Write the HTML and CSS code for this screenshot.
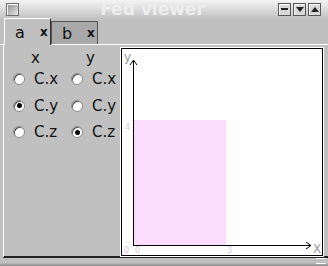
FILE: index.html
```html
<!DOCTYPE html>
<html lang="en">
<head>
    <meta charset="UTF-8">
    <title>Fed viewer</title>
    <link rel="stylesheet" href="styles.css">
</head>
<body>

<div class="window">
    <div class="titlebar">
        <span class="closebox"></span>
        <span class="title">Fed viewer</span>
        <div class="wbuttons">
            <span class="wbtn"><i class="bar"></i></span>
            <span class="wbtn"><i class="down"></i></span>
            <span class="wbtn"><i class="up"></i></span>
        </div>
    </div>

    <div class="tabs">
        <div class="tab active"><span>a</span><b>x</b></div>
        <div class="tab"><span>b</span><b>x</b></div>
    </div>

    <div class="panel">
        <div class="choices">
            <div class="head">x</div>
            <div class="head">y</div>
            <label class="opt"><span class="radio"></span>C.x</label>
            <label class="opt"><span class="radio"></span>C.x</label>
            <label class="opt"><span class="radio on"></span>C.y</label>
            <label class="opt"><span class="radio"></span>C.y</label>
            <label class="opt"><span class="radio"></span>C.z</label>
            <label class="opt"><span class="radio on"></span>C.z</label>
        </div>

        <div class="plot">
            <svg width="200" height="206" viewBox="0 0 200 206">
                <rect x="12" y="71" width="92" height="125" fill="#fcdcfc"/>
                <line x1="11.5" y1="12" x2="11.5" y2="196" stroke="#000"/>
                <polyline points="8,16 11.5,11 15,16" fill="none" stroke="#000"/>
                <line x1="11" y1="196.5" x2="188" y2="196.5" stroke="#000"/>
                <polyline points="184,193 189,196.5 184,200" fill="none" stroke="#000"/>
                <text x="2" y="12" class="axis">y</text>
                <text x="191" y="204" class="axis">X</text>
                <text x="3" y="81" class="tick">4</text>
                <text x="2" y="204" class="tick">0</text>
                <text x="13" y="204" class="tick">0</text>
                <text x="105" y="204" class="tick">3</text>
            </svg>
        </div>
    </div>
    <div class="statusbar"><span class="grip"></span></div>
</div>

</body>
</html>
```

FILE: styles.css
```css
body {
    margin: 0;
    padding: 0;
    font-family: "DejaVu Sans", Verdana, sans-serif;
}
.window {
    width: 328px;
    height: 266px;
    background-color: #c0c0c0;
    display: flex;
    flex-direction: column;
    overflow: hidden;
}
.titlebar {
    height: 18px;
    flex: none;
    display: flex;
    align-items: center;
    background: linear-gradient(#f4f4f4, #c4c4c4);
}
.closebox {
    width: 11px;
    height: 11px;
    margin-left: 6px;
    border: 1px solid #6e6e6e;
    background: linear-gradient(135deg, #8a8a8a, #e8e8e8);
    box-shadow: inset 1px 1px 0 #fff;
}
.title {
    flex: 1;
    text-align: center;
    font-weight: bold;
    font-size: 17px;
    color: #ededed;
    margin-left: 8px;
}
.wbuttons {
    display: flex;
    gap: 2px;
    margin-right: 7px;
}
.wbtn {
    width: 11px;
    height: 11px;
    border: 1px solid #555;
    background: #d8d8d8;
    box-shadow: inset 1px 1px 0 #fff;
    display: flex;
    align-items: center;
    justify-content: center;
}
.wbtn .bar {
    width: 7px;
    height: 2px;
    background: #222;
}
.wbtn .down {
    border-left: 4px solid transparent;
    border-right: 4px solid transparent;
    border-top: 5px solid #222;
}
.wbtn .up {
    border-left: 4px solid transparent;
    border-right: 4px solid transparent;
    border-bottom: 5px solid #222;
}
.tabs {
    height: 26px;
    flex: none;
    display: flex;
    align-items: flex-end;
    padding-left: 4px;
    border-bottom: 1px solid #fff;
}
.tab {
    width: 47px;
    height: 23px;
    box-sizing: border-box;
    background: #a8a8a8;
    border: 1px solid #555;
    border-bottom: none;
    display: flex;
    align-items: center;
    font-size: 16px;
    color: #111;
}
.tab.active {
    height: 27px;
    margin-bottom: -1px;
    background: #c0c0c0;
    border-top: 1px solid #fff;
    border-left: 1px solid #fff;
    border-right: 1px solid #333;
}
.tab span {
    margin-left: 10px;
    width: 25px;
}
.tab b {
    font-size: 12px;
}
.panel {
    flex: 1;
    display: flex;
    border-left: 1px solid #fff;
    margin-left: 3px;
    border-bottom: 2px solid #222;
}
.choices {
    width: 116px;
    display: grid;
    grid-template-columns: 58px 58px;
    grid-template-rows: 18px repeat(3, 26.5px);
    align-content: start;
    padding-top: 3px;
    font-size: 15px;
    color: #111;
}
.head {
    line-height: 20px;
    height: 18px;
    padding-left: 27px;
}
.head + .head {
    padding-left: 24px;
}
.opt {
    display: flex;
    align-items: center;
    padding-left: 9px;
}
.radio {
    width: 10px;
    height: 10px;
    border-radius: 50%;
    background: #fff;
    border: 1px solid #8a8a8a;
    box-shadow: inset 1px 1px 0 #555;
    margin-right: 9px;
    display: flex;
    align-items: center;
    justify-content: center;
}
.radio.on::after {
    content: "";
    width: 5px;
    height: 5px;
    border-radius: 50%;
    background: #000;
}
.plot {
    margin: 3px 5px 0 1px;
    background: #fff;
    border: 1px solid #000;
    outline: 1px solid #fff;
    flex: 1;
    overflow: hidden;
}
.plot svg {
    display: block;
}
.axis {
    font-family: "DejaVu Sans", sans-serif;
    font-size: 12px;
    fill: #999;
}
.tick {
    font-family: "DejaVu Sans", sans-serif;
    font-size: 8px;
    fill: #d8c8e0;
}
.statusbar {
    height: 8px;
    flex: none;
    background: linear-gradient(#c0c0c0 60%, #888);
    position: relative;
}
.grip {
    position: absolute;
    right: 2px;
    top: 0;
    width: 10px;
    height: 4px;
    border-top: 1px solid #fff;
    border-bottom: 1px solid #fff;
}
```
